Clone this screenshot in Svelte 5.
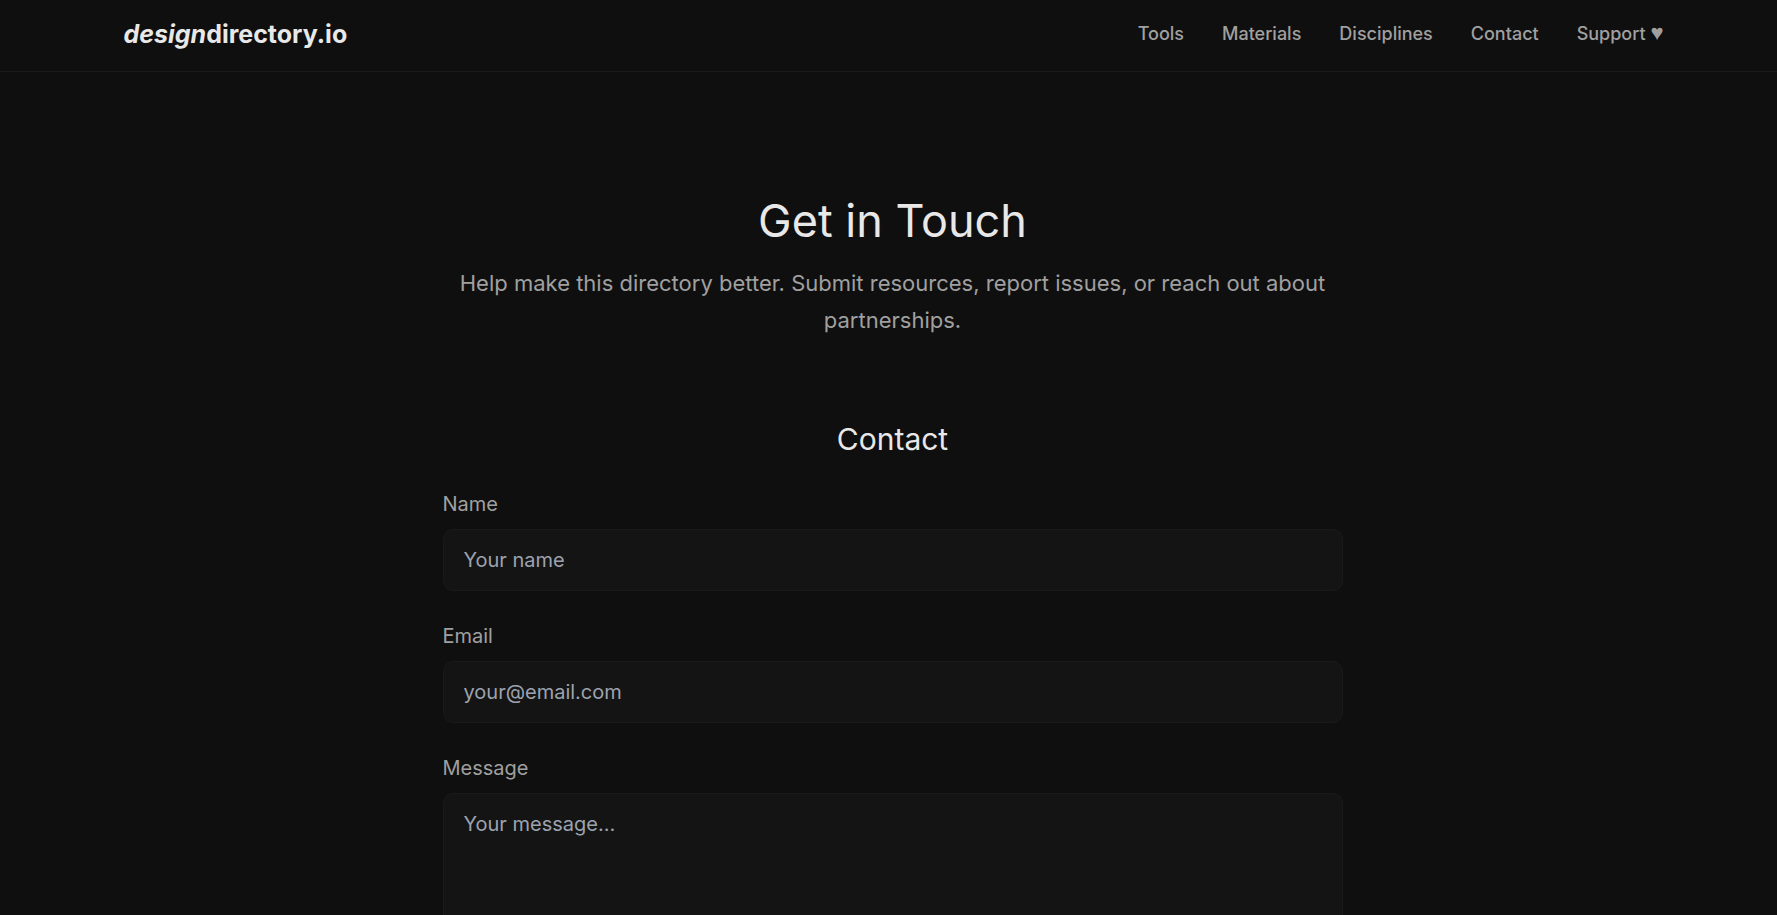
<script>
    let name = '';
    let email = '';
    let message = '';
    const links = ['Tools', 'Materials', 'Disciplines', 'Contact'];
</script>

<header>
    <div class="bar">
        <a class="logo" href="#home"><em>design</em>directory.io</a>
        <nav>
            {#each links as link}
                <a href={'#' + link.toLowerCase()}>{link}</a>
            {/each}
            <a href="#support">Support <span class="heart">♥</span></a>
        </nav>
    </div>
</header>

<main>
    <div class="content">
        <h1>Get in Touch</h1>
        <p>Help make this directory better. Submit resources, report issues, or reach out about partnerships.</p>
        <h2>Contact</h2>
        <form on:submit|preventDefault>
            <div class="field">
                <label for="name">Name</label>
                <input type="text" id="name" placeholder="Your name" bind:value={name} />
            </div>
            <div class="field">
                <label for="email">Email</label>
                <input type="email" id="email" placeholder="your@email.com" bind:value={email} />
            </div>
            <div class="field">
                <label for="message">Message</label>
                <textarea id="message" placeholder="Your message..." bind:value={message}></textarea>
            </div>
        </form>
    </div>
</main>

<style>
  :global(body) {
    margin: 0;
    background-color: #0f0f0f;
    color: #e8e8e8;
    font-family: Inter, "Liberation Sans", sans-serif;
  }

  header {
    border-bottom: 1px solid #1a1a1a;
  }

  .bar {
    display: flex;
    justify-content: space-between;
    align-items: center;
    max-width: 1540px;
    height: 67px;
    margin: 0 auto;
    padding: 0 32px 4px 42px;
  }

  .logo {
    color: #e8e8e8;
    font-size: 25px;
    font-weight: 700;
    line-height: 32px;
    text-decoration: none;
  }

  nav {
    display: flex;
    gap: 38px;
  }

  nav a {
    color: #a0a0a0;
    font-size: 18px;
    font-weight: 500;
    line-height: 24px;
    text-decoration: none;
  }

  nav a:hover {
    color: #e8e8e8;
  }

  .heart {
    font-family: "Liberation Sans", sans-serif;
    font-size: 22px;
    line-height: 1;
  }

  main {
    padding: 113px 24px 0 32px;
  }

  .content {
    max-width: 900px;
    margin: 0 auto;
  }

  h1 {
    margin: 0 0 8px;
    font-size: 45px;
    font-weight: 400;
    line-height: 72px;
    text-align: center;
  }

  p {
    margin: 0 0 76px;
    color: #a0a0a0;
    font-size: 22px;
    line-height: 37px;
    text-align: center;
  }

  h2 {
    margin: 0 0 25px;
    font-size: 30px;
    font-weight: 400;
    line-height: 48px;
    text-align: center;
  }

  .field {
    margin-bottom: 29px;
  }

  label {
    display: block;
    margin-bottom: 9px;
    color: #a0a0a0;
    font-size: 20px;
    line-height: 32px;
  }

  input,
  textarea {
    display: block;
    box-sizing: border-box;
    width: 100%;
    height: 62px;
    padding: 14px 20px;
    border: 1px solid #1a1a1a;
    border-radius: 10px;
    background-color: #141414;
    color: #e8e8e8;
    font-family: inherit;
    font-size: 20px;
    line-height: 32px;
  }

  textarea {
    height: 200px;
    resize: vertical;
  }

  input::placeholder,
  textarea::placeholder {
    color: #9ca3af;
    opacity: 1;
  }

  input:focus,
  textarea:focus {
    outline: none;
    border-color: #a0a0a0;
  }
</style>
